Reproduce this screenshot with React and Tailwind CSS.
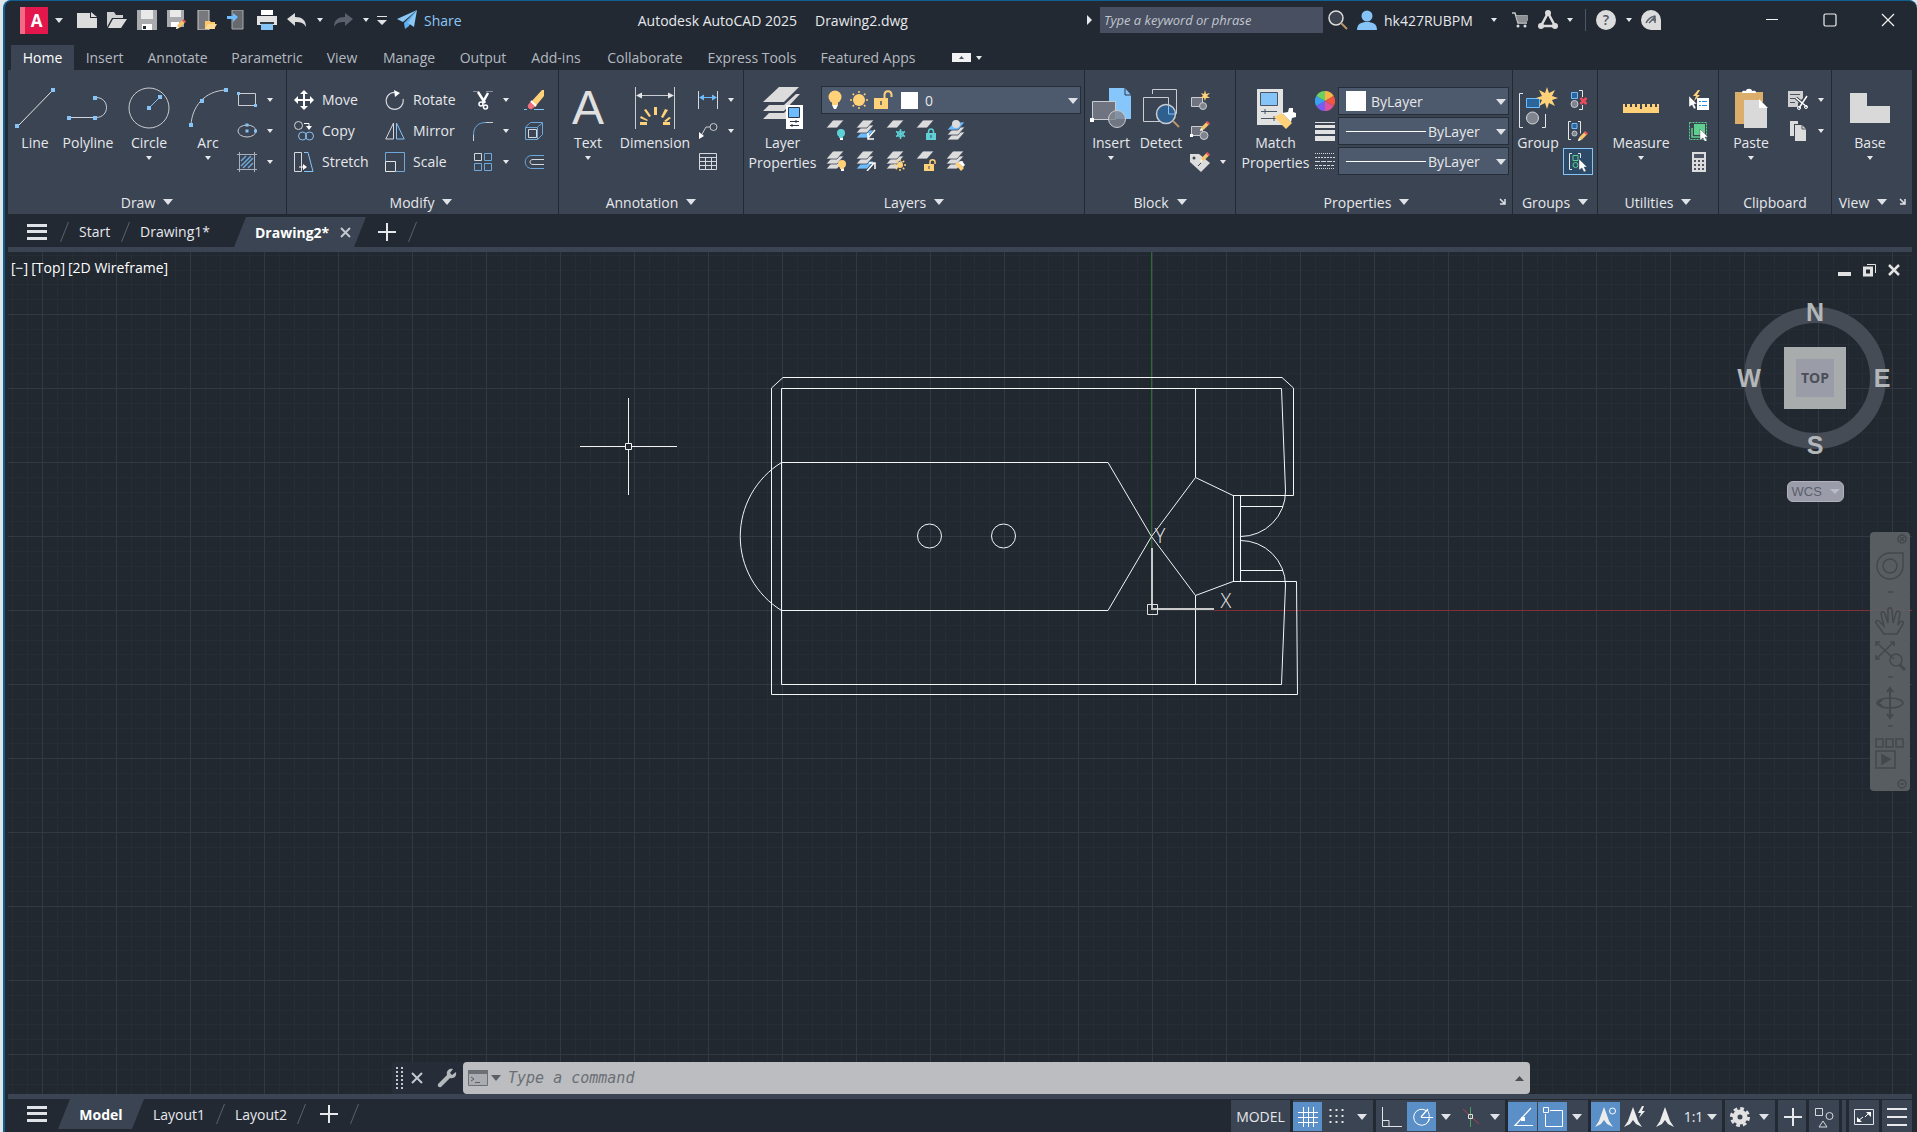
import { useState } from "react";

const Svg = ({ w = 20, h = 20, children, className = "" }) => (
  <svg
    width={w}
    height={h}
    viewBox={`0 0 ${w} ${h}`}
    fill="none"
    aria-hidden="true"
    className={`shrink-0 ${className}`}
  >
    {children}
  </svg>
);

const Caret = ({ big }) =>
  big ? (
    <Svg w={10} h={6}>
      <path d="M0 0h10L5 6z" fill="#dfe2e6" />
    </Svg>
  ) : (
    <Svg w={6} h={4}>
      <path d="M0 0h6L3 4z" fill="#e6e8eb" />
    </Svg>
  );

// ---------- shared icon parts ----------

const Sheet = ({ y = 0, fill = "#dcdcdc" }) => (
  <path d={`M7 ${y}h11l-7 8h-11z`} fill={fill} stroke="#3b4453" strokeWidth=".8" />
);

const Stack = ({ top = "#dcdcdc", low = "#dcdcdc" }) => (
  <>
    <Sheet y={10} fill={low} />
    <Sheet y={5} />
    <Sheet y={0} fill={top} />
  </>
);

const Bulb = ({ x, y, fill }) => (
  <>
    <circle cx={x} cy={y} r="4" fill={fill} />
    <path d={`M${x - 2} ${y + 3}h4v2h-4z`} fill={fill} />
    <path d={`M${x - 1} ${y + 5}h3v2h-3z`} fill="#fff" />
  </>
);

const sunRays = [0, 45, 90, 135, 180, 225, 270, 315];

const Sun = ({ x, y, r = 4 }) => (
  <>
    <circle cx={x} cy={y} r={r} fill="#ffd27a" />
    {sunRays.map((a) => (
      <path
        key={a}
        d={`M${x} ${y - r - 1}v-2`}
        stroke="#ffd27a"
        strokeWidth="1.500"
        transform={`rotate(${a} ${x} ${y})`}
      />
    ))}
  </>
);

const Pencil = ({ x = 0, y = 0 }) => (
  <g transform={`translate(${x} ${y})`}>
    <path d="M0 10l1.500-4L7 .5 9.500 3 4 8.500z" fill="#f6c56b" />
    <path d="M6 1.500L7.500 0 10 2.500 8.500 4z" fill="#e8505b" />
    <path d="M0 10l1-3 2 2z" fill="#fff" />
  </g>
);

const Pointer = ({ x = 0, y = 0 }) => (
  <path
    d={`M${x} ${y}v11l3-2 2 4 2-1-2-4h3z`}
    fill="#fff"
    stroke="#3b4453"
    strokeWidth=".4"
  />
);

const Dot = ({ x, y }) => <path d={`M${x - 2} ${y - 2}h4v4h-4z`} fill="#86c3f7" />;

// ---------- quick access toolbar ----------

const quickIcons = [
  {
    label: "New",
    icon: <path d="M0 3h13v5h7v10H0zM14 2l6 5h-6z" fill="#dcdcdc" />,
  },
  {
    label: "Open",
    icon: (
      <>
        <path d="M0 2h7l2 3h7v3H5L0 17z" fill="#cfcfcf" />
        <path d="M6 9h14l-6 9H1z" fill="#dcdcdc" />
      </>
    ),
  },
  {
    label: "Save",
    icon: (
      <>
        <path d="M0 0h20v20H0z" fill="#a9abae" />
        <path d="M4 0h12v9H4z" fill="#e9e9e9" />
        <path d="M5 14h10v6H5z" fill="#fff" />
        <path d="M6 16h3v3H6z" fill="#222933" />
      </>
    ),
  },
  {
    label: "Save As",
    icon: (
      <>
        <path d="M0 0h17v17H0z" fill="#a9abae" />
        <path d="M3 0h11v7H3z" fill="#e9e9e9" />
        <path d="M4 12h8v5H4z" fill="#fff" />
        <Pencil x={9} y={9} />
      </>
    ),
  },
  {
    label: "Open from Web & Mobile",
    icon: (
      <>
        <path d="M1 0h11v20H1z" fill="#77797d" stroke="#c9c9c9" />
        <path d="M8 11h5l1 1h4v7H8z" fill="#ffc766" />
        <path d="M11 14h9l-3 5H8z" fill="#ffda94" />
      </>
    ),
  },
  {
    label: "Save to Web & Mobile",
    icon: (
      <>
        <path d="M5 0h11v19H5z" fill="#66696e" stroke="#a9abae" />
        <path d="M0 6h6V3l5 4-5 5V9H0z" fill="#6dbcff" />
      </>
    ),
  },
  {
    label: "Plot",
    icon: (
      <>
        <path d="M4 0h12v5H4z" fill="#fff" />
        <path d="M0 6h20v9H0z" fill="#e2e2e2" />
        <path d="M3 12h14v2H3z" fill="#333b47" />
        <path d="M4 14h12v6H4z" fill="#86c3f7" />
      </>
    ),
  },
];

const Undo = ({ color }) => (
  <Svg>
    <path d="M8 3v4c7 0 11 3 11 10-2-4-5-5-11-5v4L0 9z" fill={color} />
  </Svg>
);

// ---------- ribbon icons ----------

const icons = {
  line: (
    <Svg w={40} h={42}>
      <path d="M3 39L38 3" stroke="#e6e6e6" />
      <Dot x={2} y={39} />
      <Dot x={38} y={3} />
    </Svg>
  ),
  polyline: (
    <Svg w={42} h={42}>
      <path d="M2 30.500h27c14 0 14-20 0-20" stroke="#d0d3d7" />
      <Dot x={2} y={31} />
      <Dot x={28} y={31} />
      <Dot x={28} y={11} />
    </Svg>
  ),
  circle: (
    <Svg w={42} h={42}>
      <circle cx="21" cy="21" r="20" stroke="#c9ccd1" />
      <path d="M21 21L32 10" stroke="#86c3f7" />
      <Dot x={21} y={21} />
      <Dot x={32} y={10} />
    </Svg>
  ),
  arc: (
    <Svg w={40} h={42}>
      <path d="M3 38C4 20 16 4 38 3" stroke="#c9ccd1" />
      <Dot x={3} y={38} />
      <Dot x={14} y={14} />
      <Dot x={38} y={3} />
    </Svg>
  ),
  rectangle: (
    <Svg>
      <path d="M1.500 3.500h17v12h-17z" stroke="#c9ccd1" />
      <path d="M0 2h3v3H0zM17 14h3v3h-3z" fill="#86c3f7" />
    </Svg>
  ),
  ellipse: (
    <Svg>
      <ellipse cx="10" cy="10" rx="9" ry="6" stroke="#c9ccd1" />
      <path d="M8.500 2.500h3v3h-3zM8.500 8.500h3v3h-3zM17 8.500h3v3h-3z" fill="#86c3f7" />
    </Svg>
  ),
  hatch: (
    <Svg>
      <path d="M2.500 0v20M17.500 0v20M0 2.500h20M0 17.500h20" stroke="#a9b0ba" />
      <path d="M4 9l5-5M4 14L14 4M6 16L16 6M11 16l5-5" stroke="#6fa8d8" strokeWidth="1.500" />
    </Svg>
  ),
  move: (
    <Svg>
      <path
        d="M10 0l4 4h-3v5h5V6l4 4-4 4v-3h-5v5h3l-4 4-4-4h3v-5H4v3l-4-4 4-4v3h5V4H6z"
        fill="#fff"
      />
    </Svg>
  ),
  copy: (
    <Svg>
      <circle cx="4.500" cy="4.500" r="4" stroke="#d5d8dc" />
      <path d="M10 2.500h5V7" stroke="#fff" />
      <path d="M12 5h6l-3 4z" fill="#fff" />
      <circle cx="8.500" cy="15" r="4" stroke="#86c3f7" />
      <circle cx="15.500" cy="15" r="4" stroke="#86c3f7" />
    </Svg>
  ),
  stretch: (
    <Svg>
      <path d="M.5.500h7v19h-7z" stroke="#d5d8dc" />
      <path d="M10 .5h4l5 19H10" stroke="#86c3f7" />
      <path d="M5 15h5" stroke="#fff" />
      <path d="M9 12l4 3-4 3z" fill="#fff" />
    </Svg>
  ),
  rotate: (
    <Svg>
      <path d="M13 3a8.500 8.500 0 1 0 5 6" stroke="#d5d8dc" strokeWidth="1.200" />
      <path d="M9 0l6 3-5 4z" fill="#fff" />
    </Svg>
  ),
  mirror: (
    <Svg>
      <path d="M8.500 2v16H.8z" stroke="#d5d8dc" />
      <path d="M11.500 2v16h7.700z" stroke="#86c3f7" />
    </Svg>
  ),
  scale: (
    <Svg>
      <path d="M.5 9V.500h19v19H11" stroke="#6fa8d8" />
      <path d="M.5 9.500h10v10H.5z" stroke="#e6e6e6" />
    </Svg>
  ),
  trim: (
    <Svg>
      <path d="M0 1.500h6M13 1.500h7" stroke="#86909c" />
      <path d="M5 2l7 11M15 3l-5 9" stroke="#fff" strokeWidth="2.500" />
      <circle cx="8" cy="14" r="2" stroke="#fff" strokeWidth="1.500" />
      <circle cx="12.500" cy="17" r="2" stroke="#fff" strokeWidth="1.500" />
    </Svg>
  ),
  fillet: (
    <Svg>
      <path d="M.5 20v-6" stroke="#c9ccd1" />
      <path d="M.5 14C.5 6 5 1.500 13 1.500" stroke="#6fa8d8" />
      <path d="M13 1.500h7" stroke="#c9ccd1" />
    </Svg>
  ),
  array: (
    <Svg>
      <path d="M1.500 1.500h7v7h-7z" stroke="#d5d8dc" />
      <path d="M11.500 1.500h7v7h-7zM1.500 11.500h7v7h-7zM11.500 11.500h7v7h-7z" stroke="#6fa8d8" />
    </Svg>
  ),
  erase: (
    <Svg>
      <path d="M0 19.500h3M10 19.500h10" stroke="#86c3f7" />
      <path d="M7 12L18 0h2v6l-9 11z" fill="#ffd27a" />
      <path d="M4 15l3-4 5 5-4 3c-3 1-5-2-4-4z" fill="#f0707c" />
      <path d="M7 11l5 5" stroke="#fff" strokeWidth="2" />
    </Svg>
  ),
  explode: (
    <Svg>
      <path d="M1.500 6l5-4.500h12v12L14 18" stroke="#6fa8d8" />
      <path d="M1.500 6.500h12v12h-12zM13.500 6l5-4" stroke="#6fa8d8" />
      <path d="M4.500 8.500h8v8h-8z" stroke="#d5d8dc" />
    </Svg>
  ),
  offset: (
    <Svg>
      <path d="M20 3.500H8c-9 0-9 13 0 13h12" stroke="#6fa8d8" />
      <path d="M20 7.500H9c-4 0-4 5 0 5h11" stroke="#d5d8dc" />
    </Svg>
  ),
  dimension: (
    <Svg w={42} h={42}>
      <path d="M1.500 0v42M40.500 0v42M3 8.500h36" stroke="#c9ccd1" />
      <path d="M2 8.500l6-3v6zM40 8.500l-6-3v6z" fill="#e6e6e6" />
      <path
        d="M20 28v-8h3v8zM15 30l-5-7 2-1 5 7zM27 30l4-8 3 1-5 8zM13 34l-7-3 1-2 7 4zM30 34l5-4 2 1-5 4zM6 35h7v3H6zM29 35h7v3h-7z"
        fill="#ffd27a"
      />
    </Svg>
  ),
  linear: (
    <Svg>
      <path d="M.5 1v18M19.500 1v18" stroke="#d5d8dc" />
      <path d="M3 7.500h14" stroke="#6dbcff" />
      <path d="M1 7.500l5-3v6zM19 7.500l-5-3v6z" fill="#6dbcff" />
    </Svg>
  ),
  leader: (
    <Svg>
      <circle cx="15.500" cy="6" r="3.500" stroke="#c9ccd1" />
      <path d="M12 6H8l-5 9" stroke="#c9ccd1" />
      <path d="M1 18V11l5 4z" fill="#fff" />
    </Svg>
  ),
  table: (
    <Svg>
      <path d="M1.500 1.500h17v16h-17zM1 5.500h18M1 9.500h18M1 13.500h18M7.500 5v12M13.500 5v12" stroke="#d5d8dc" />
    </Svg>
  ),
  layerProps: (
    <Svg w={42} h={42}>
      <path d="M17 0h20L22 15H1z" fill="#dcdcdc" />
      <path d="M1 24l6-6h15l12-11h4L22 24z" fill="#dcdcdc" />
      <path d="M1 32l6-6h15l2-2v8z" fill="#dcdcdc" />
      <path d="M24 18h17v24H24z" fill="#fff" />
      <path d="M26.500 20.500h11v10h-11z" fill="#6dbcff" stroke="#2c3644" />
      <path d="M28 34.500h9M28 38.500h9M34 33v3M30 37v3" stroke="#2c3644" />
    </Svg>
  ),
  insert: (
    <Svg w={42} h={42}>
      <path d="M19 1h16l6 7v24H19z" fill="#86c6fb" />
      <path d="M35 1v7h6" stroke="#2c3644" />
      <path d="M2.500 14.500h23v18h-23z" fill="#6f7480" stroke="#c9ccd1" />
      <path d="M0 31h4v4H0z" fill="#fff" />
      <circle cx="27" cy="32" r="8.500" fill="#7f848e" fillOpacity=".8" stroke="#c9ccd1" />
    </Svg>
  ),
  detect: (
    <Svg w={42} h={42}>
      <path d="M12.500 7V2.500h24v24H33" stroke="#c9ccd1" />
      <path d="M3.500 10.500h25v24h-25z" stroke="#c9ccd1" />
      <circle cx="26" cy="27" r="9.500" fill="#2f5f8f" stroke="#c9ccd1" strokeWidth="1.500" />
      <path d="M28.500 19v8h7" stroke="#86c3f7" />
      <path d="M33 34l6 6" stroke="#b9946c" strokeWidth="2" />
    </Svg>
  ),
  match: (
    <Svg w={42} h={42}>
      <path d="M2 2h26v36H2z" fill="#e2e2e2" />
      <path d="M5.500 5.500h17v13h-17z" fill="#86c3f7" stroke="#4b5563" />
      <path d="M6 24.500h16M6 31.500h16M10 22v5M19 29v5" stroke="#4b5563" />
      <path d="M19 30l8-4 10 10-6 6z" fill="#ffd27a" />
      <path d="M27 26l6-1 1-4h4v4l3 1v4l-4 1-1 4z" fill="#fff" />
    </Svg>
  ),
  colorWheel: (
    <Svg>
      <path d="M10 10V0a10 10 0 0 1 8.700 5z" fill="#f7b547" />
      <path d="M10 10l8.700-5a10 10 0 0 1 0 10z" fill="#f0563f" />
      <path d="M10 10l8.700 5A10 10 0 0 1 10 20z" fill="#e0529c" />
      <path d="M10 10v10a10 10 0 0 1-8.700-5z" fill="#7a5cf0" />
      <path d="M10 10l-8.700 5a10 10 0 0 1 0-10z" fill="#3aa0f0" />
      <path d="M10 10L1.300 5A10 10 0 0 1 10 0z" fill="#6ccf5f" />
    </Svg>
  ),
  weight: (
    <Svg>
      <path d="M0 1h20v1H0zM0 4h20v3H0zM0 9h20v4H0zM0 15h20v5H0z" fill="#e2e2e2" />
    </Svg>
  ),
  linetype: (
    <Svg>
      <path d="M0 2.500h20" stroke="#d5d8dc" strokeDasharray="1 1" />
      <path d="M0 6.500h20" stroke="#d5d8dc" strokeDasharray="2 1" />
      <path d="M0 10.500h20" stroke="#d5d8dc" strokeDasharray="5 1" />
      <path d="M0 14.500h20" stroke="#d5d8dc" strokeDasharray="3 1" />
      <path d="M0 17.500h20" stroke="#d5d8dc" strokeDasharray="1 1" />
    </Svg>
  ),
  group: (
    <Svg w={42} h={42}>
      <path d="M6 6.500H2.500v34H6M25 40.500h3.500V27" stroke="#e6e6e6" />
      <path d="M9.500 11.500h13v9h-13z" fill="#2c659c" stroke="#6dbcff" />
      <circle cx="15.500" cy="31" r="6" fill="#7f848e" stroke="#d5d8dc" />
      <path
        d="M30 0l2 6 6-3-3 6 6 2-6 2 3 6-6-3-2 6-2-6-6 3 3-6-6-2 6-2-3-6 6 3z"
        fill="#ffd27a"
      />
    </Svg>
  ),
  ruler: (
    <Svg w={42} h={42}>
      <path
        d="M3 17h2v3h2v-3h3v3h2v-3h3v3h2v-3h3v5h2v-5h3v3h2v-3h3v3h2v-3h3v3h2v-3h2v9H3z"
        fill="#ffd27a"
      />
    </Svg>
  ),
  paste: (
    <Svg w={42} h={42}>
      <path d="M5 5h28v10H14v22H5z" fill="#dcae6c" />
      <path d="M12 6c0-3 2-2 4-2 0-3 6-3 6 0 2 0 4-1 4 2z" fill="#fff" />
      <path d="M14 13h15l8 8v20H14z" fill="#d9d9d9" />
      <path d="M29 12l9 9h-9z" fill="#fff" />
    </Svg>
  ),
  base: (
    <Svg w={42} h={42}>
      <path d="M1 6h17v13h23v17H1z" fill="#d9d9d9" />
    </Svg>
  ),
  createBlock: (
    <Svg>
      <path d="M1.500 7.500h11v9h-11z" fill="#6f7480" stroke="#c9ccd1" />
      <circle cx="13" cy="16" r="3.500" fill="#7f848e" stroke="#c9ccd1" />
      <path d="M15 0l1 4 4-1-3 3 3 2-4 0-1 3-1-3-4 0 3-2-2-3 3 1z" fill="#ffd27a" />
    </Svg>
  ),
  editBlock: (
    <Svg>
      <path d="M1.500 5.500h11v9h-11z" fill="#6f7480" stroke="#c9ccd1" />
      <circle cx="14" cy="14.500" r="4" fill="#7f848e" stroke="#c9ccd1" />
      <path d="M0 13h3v3H0z" fill="#fff" />
      <Pencil x={10} y={0} />
    </Svg>
  ),
  attribute: (
    <Svg>
      <path d="M0 2h9l11 9-9 9L0 10z" fill="#dcdcdc" />
      <circle cx="4" cy="6" r="1.500" fill="#3b4453" />
      <path d="M8 14l3-3" stroke="#3b4453" />
      <Pencil x={10} y={0} />
    </Svg>
  ),
  ungroup: (
    <Svg>
      <path d="M3.500 2.500h6v6h-6z" fill="#2c659c" stroke="#6dbcff" />
      <circle cx="6.500" cy="14" r="3.500" fill="#7f848e" stroke="#c9ccd1" />
      <path d="M11 .500h3.500V7M14.500 15v4.500H11" stroke="#e6e6e6" />
      <path d="M12.500 8l6 6M18.500 8l-6 6" stroke="#ee4b5a" strokeWidth="2.500" />
    </Svg>
  ),
  groupEdit: (
    <Svg>
      <path d="M3 .500H.500v18H3M10 .500h2.500v12" stroke="#e6e6e6" />
      <path d="M4 2.500h5v5H4z" fill="#2c659c" stroke="#6dbcff" />
      <circle cx="6.500" cy="12.500" r="2.500" fill="#7f848e" stroke="#c9ccd1" />
      <Pencil x={10} y={10} />
    </Svg>
  ),
  groupSelect: (
    <Svg>
      <path d="M4 1.500H1.500v16H4M10 1.500h2.500V6" stroke="#e6e6e6" />
      <path d="M5 3.500h5v5H5z" stroke="#5bd08a" />
      <circle cx="7.500" cy="13" r="2.500" stroke="#5bd08a" />
      <Pointer x={11} y={7} />
    </Svg>
  ),
  quickSelect: (
    <Svg>
      <Pointer x={0} y={6} />
      <path d="M9 0L4 6h3l-2 5 6-6H8l3-5z" fill="#ffd27a" />
      <path d="M8 8h12v12H8z" fill="#fff" />
      <path d="M10 11.500h2M10 15.500h2M13 11.500h5M13 15.500h5" stroke="#2c8be0" />
    </Svg>
  ),
  selectAll: (
    <Svg>
      <path d="M.5 1.500h17v17H.5z" stroke="#5bd08a" strokeDasharray="2 1" />
      <path d="M5 3h11v11H5z" fill="#5fcf8d" />
      <path d="M3 7v9h9" stroke="#5fcf8d" strokeWidth="1.500" />
      <Pointer x={11} y={8} />
    </Svg>
  ),
  calculator: (
    <Svg>
      <path d="M3 0h14v20H3z" fill="#dcdcdc" />
      <path d="M5 2h10v4H5z" fill="#4b5563" />
      <path
        d="M5 8h2v2H5zM9 8h2v2H9zM13 8h2v2h-2zM5 12h2v2H5zM9 12h2v2H9zM13 12h2v2h-2zM5 16h2v2H5zM9 16h2v2H9zM13 16h2v2h-2z"
        fill="#4b5563"
      />
    </Svg>
  ),
  cut: (
    <Svg>
      <path d="M0 1h15v7l-5 5v4H0z" fill="#d0d0d0" />
      <path d="M2 4.500h10M2 8.500h6M2 12.500h5" stroke="#4b5563" />
      <path d="M8 8l11 9M19 6l-8 12" stroke="#3b4453" strokeWidth="3.500" />
      <path d="M8 8l11 9M19 6l-8 12" stroke="#fff" strokeWidth="1.500" />
      <circle cx="11" cy="18" r="1.500" stroke="#fff" />
      <circle cx="18" cy="17" r="1.500" stroke="#fff" />
    </Svg>
  ),
  copyClip: (
    <Svg>
      <path d="M2 0h8v3H6v12H2z" fill="#dcdcdc" />
      <path d="M7 4h7l4 4v12H7z" fill="#dcdcdc" />
      <path d="M14 4v4h4" stroke="#4b5563" />
    </Svg>
  ),
};

// ---------- layer tools ----------

const layerTools = [
  ["Off", <><Sheet /><Bulb x={15} y={13} fill="#5fd0d6" /></>],
  ["Isolate", <><Stack low="#6dbcff" /><path d="M19 10l-7 8M12 13v6h6" stroke="#fff" strokeWidth="1.500" /></>],
  ["Freeze", <><Sheet /><path d="M14.500 9v10M10 11.500l9 5M19 11.500l-9 5" stroke="#5fd0d6" strokeWidth="1.500" /><circle cx="14.500" cy="14" r="3" stroke="#5fd0d6" /></>],
  ["Lock", <><Sheet /><path d="M12.500 14v-2c0-4 5-4 5 0v2" stroke="#5fd0d6" strokeWidth="1.500" /><path d="M10 13h10v7H10z" fill="#5fd0d6" /><path d="M15 15v3" stroke="#3b4453" /></>],
  ["Make Current", <><g transform="translate(1 2)"><Stack top="#6dbcff" /></g><circle cx="10" cy="4" r="4" fill="#dcdcdc" /></>],
  ["Turn All On", <><Stack /><Bulb x={16} y={13} fill="#ffd27a" /></>],
  ["Unisolate", <><Stack low="#6dbcff" /><path d="M11 20l7-8M13 12h6v6" stroke="#fff" strokeWidth="1.500" /></>],
  ["Thaw All", <><Stack /><Sun x={14} y={14} r={3} /></>],
  ["Unlock", <><Sheet /><path d="M14 14v-3c0-3 5-3 5 0v2" stroke="#ffd27a" strokeWidth="1.500" /><path d="M8 13h10v7H8z" fill="#ffd27a" /><path d="M13 15v3" stroke="#3b4453" /></>],
  ["Match Layer", <><Stack /><path d="M9 13l3-2 6 6-3 3z" fill="#ffd27a" /><path d="M12 11l4-1 3 4-2 2z" fill="#fff" /></>],
];

// ---------- ribbon building blocks ----------

const Panel = ({
  title,
  width,
  caret = true,
  launcher,
  footerPad = "",
  children,
}) => (
  <section
    className={`${width} flex flex-col border-r border-[#222933] last:border-r-0`}
  >
    <div className="flex h-[121px] items-start pt-[14px]">{children}</div>
    <div
      className={`${footerPad} relative flex h-[22px] items-center justify-center gap-2`}
    >
      <span>{title}</span>
      {caret && <Caret big />}
      {launcher && (
        <button
          aria-label={`${title} settings`}
          className="absolute right-[6px] top-[7px]"
        >
          <Svg w={7} h={7}>
            <path d="M1 1l5 5M6 1v5H1" stroke="#dfe2e6" strokeWidth="1.500" />
          </Svg>
        </button>
      )}
    </div>
  </section>
);

const BigButton = ({ icon, label, width, caret }) => (
  <button className={`${width} flex shrink-0 flex-col items-center`}>
    <span className="flex h-[49px] items-center justify-center pb-[1px]">
      {icon}
    </span>
    <span className="whitespace-pre-line text-center leading-5">{label}</span>
    {caret && (
      <span className="mt-[3px]">
        <Caret />
      </span>
    )}
  </button>
);

const SmallButton = ({ icon, label, caret, active }) => (
  <div className="flex h-[31px] items-center">
    <button
      aria-label={label}
      className={`flex h-[27px] w-[30px] items-center justify-center border ${
        active ? "border-[#86c3f7] bg-[#2d4a68]" : "border-transparent"
      }`}
    >
      {icon}
    </button>
    {caret && (
      <button aria-label={`${label} options`} className="px-[5px]">
        <Caret />
      </button>
    )}
  </div>
);

const TextButton = ({ icon, label }) => (
  <button className="flex h-[31px] items-center gap-2">
    {icon}
    {label}
  </button>
);

const Combo = ({ label, value, line, swatch, swatchSize, prefix, pad }) => (
  <div className="relative flex h-7 items-center border border-[#252d38] bg-[#4d596c]">
    {prefix}
    {swatch && <span className={`${swatchSize} ml-[7px] shrink-0 bg-white`} />}
    {line && <span className="ml-[7px] h-px w-[80px] shrink-0 bg-white" />}
    <select
      aria-label={label}
      className={`${pad} h-full min-w-0 flex-1 appearance-none bg-transparent outline-none`}
    >
      <option>{value}</option>
    </select>
    <span className="pointer-events-none absolute right-[2px] top-[11px]">
      <Caret big />
    </span>
  </div>
);

const ribbonTabs = [
  ["Home", "w-[63px]"],
  ["Insert", "w-[61px]"],
  ["Annotate", "w-[85px]"],
  ["Parametric", "w-[94px]"],
  ["View", "w-[56px]"],
  ["Manage", "w-[78px]"],
  ["Output", "w-[70px]"],
  ["Add-ins", "w-[76px]"],
  ["Collaborate", "w-[102px]"],
  ["Express Tools", "w-[112px]"],
  ["Featured Apps", "w-[120px]"],
];

function TitleBar() {
  return (
    <header className="flex h-[44px] items-center pb-[6px] pl-3">
      <button aria-label="Application menu" className="flex items-center gap-[7px]">
        <span className="relative flex h-[27px] w-[28px] items-center justify-center bg-[#e3174c] pl-[5px] text-[17px] font-bold leading-none text-white">
          <span className="absolute inset-y-0 left-0 w-[5px] bg-[#f26a86]" />
          A
        </span>
        <Svg w={8} h={5}>
          <path d="M0 0h8L4 5z" fill="#dfe2e6" />
        </Svg>
      </button>
      <div className="ml-[14px] flex items-center gap-[10px]">
        {quickIcons.map((q) => (
          <button key={q.label} aria-label={q.label}>
            <Svg>{q.icon}</Svg>
          </button>
        ))}
        <button aria-label="Undo">
          <Undo color="#dcdcdc" />
        </button>
        <Caret />
        <button aria-label="Redo" className="-scale-x-100">
          <Undo color="#5a616c" />
        </button>
        <Caret />
      </div>
      <button aria-label="Customize" className="ml-[8px]">
        <Svg w={10} h={10}>
          <path d="M0 1h10v1H0zM0 5h10L5 10z" fill="#dfe2e6" />
        </Svg>
      </button>
      <a href="#share" className="ml-[10px] flex items-center gap-[7px] text-[#8cc8f5]">
        <Svg>
          <path d="M20 0L0 9l6 3z" fill="#8cc8f5" />
          <path d="M20 0L7 13l1 6 4-3z" fill="#5fb0f0" />
          <path d="M20 0l-9 13 6 4z" fill="#8cc8f5" />
        </Svg>
        Share
      </a>
      <div className="flex flex-1 justify-center gap-[18px] pr-[3px]">
        <span>Autodesk AutoCAD 2025</span>
        <span>Drawing2.dwg</span>
      </div>
      <Svg w={5} h={10}>
        <path d="M0 0l5 5-5 5z" fill="#e6e8eb" />
      </Svg>
      <input
        aria-label="Search help"
        placeholder="Type a keyword or phrase"
        className="ml-[8px] h-[26px] w-[223px] bg-[#474f60] pl-1 text-[13px] italic outline-none placeholder:text-[#c2c6ce]"
      />
      <button aria-label="Search" className="ml-[5px]">
        <Svg>
          <circle cx="8" cy="8" r="7" fill="#3d444f" stroke="#dcdcdc" strokeWidth="1.500" />
          <path d="M13 13l6 6" stroke="#b9946c" strokeWidth="2" />
        </Svg>
      </button>
      <button className="ml-[9px] flex items-center gap-[7px]">
        <Svg>
          <circle cx="10" cy="6" r="5.500" fill="#86c3f7" />
          <path d="M0 20c0-6 4-8 10-8s10 2 10 8z" fill="#86c3f7" />
        </Svg>
        <span className="w-[100px] text-left">hk427RUBPM</span>
        <Caret />
      </button>
      <div className="ml-[14px] flex items-center gap-[9px]">
        <button aria-label="Autodesk store">
          <Svg w={18} h={18}>
            <path d="M1 2h3l3 10h9M5 5h11v4H6" stroke="#c9c9c9" strokeWidth="1.500" />
            <path d="M5 5h12l-1 6H7z" fill="#8b8e93" />
            <circle cx="7" cy="15" r="1.500" fill="#dcdcdc" />
            <circle cx="14" cy="15" r="1.500" fill="#dcdcdc" />
          </Svg>
        </button>
        <button aria-label="Stay connected" className="flex items-center gap-[9px]">
          <Svg>
            <path d="M10 3L3 16h14z" stroke="#dcdcdc" strokeWidth="2.500" />
            <circle cx="10" cy="3" r="3" fill="#dcdcdc" />
            <circle cx="3" cy="16" r="3" fill="#dcdcdc" />
            <circle cx="17" cy="16" r="3" fill="#dcdcdc" />
          </Svg>
          <Caret />
        </button>
      </div>
      <span className="ml-[12px] h-[22px] w-px bg-[#4d5663]" />
      <button aria-label="Help" className="ml-[10px] flex items-center gap-[10px]">
        <span className="flex size-5 items-center justify-center rounded-full bg-[#dcdcdc] text-[14px] font-semibold leading-none text-[#4b5563]">
          ?
        </span>
        <Caret />
      </button>
      <button aria-label="Assistant" className="ml-[9px]">
        <Svg>
          <path d="M10 0a10 10 0 0 1 10 10v10H10a10 10 0 0 1 0-20z" fill="#dcdcdc" />
          <path d="M5 13c2-4 4-6 9-7M8 13l6-6v6M10 10h5" stroke="#5a616c" strokeWidth="1.500" />
        </Svg>
      </button>
      <div className="ml-[104px] mr-[17px] flex items-center gap-[44px]">
        <button aria-label="Minimize">
          <Svg w={14} h={14}>
            <path d="M1 6.500h12" stroke="#f2f2f2" />
          </Svg>
        </button>
        <button aria-label="Maximize">
          <Svg w={14} h={14}>
            <rect x="1" y="1" width="12" height="12" rx="1.500" stroke="#f2f2f2" strokeWidth="1.200" />
          </Svg>
        </button>
        <button aria-label="Close">
          <Svg w={14} h={14}>
            <path d="M1 1l12 12M13 1L1 13" stroke="#f2f2f2" strokeWidth="1.200" />
          </Svg>
        </button>
      </div>
    </header>
  );
}

function Ribbon() {
  return (
    <div className="flex h-[144px] bg-[#3b4453]">
      <Panel title="Draw" width="w-[279px]">
        <BigButton width="w-[54px]" label="Line" icon={icons.line} />
        <BigButton width="w-[52px]" label="Polyline" icon={icons.polyline} />
        <BigButton width="w-[70px]" label="Circle" icon={icons.circle} caret />
        <BigButton width="w-[48px]" label="Arc" icon={icons.arc} caret />
        <div>
          <SmallButton label="Rectangle" icon={icons.rectangle} caret />
          <SmallButton label="Ellipse" icon={icons.ellipse} caret />
          <SmallButton label="Hatch" icon={icons.hatch} caret />
        </div>
      </Panel>

      <Panel title="Modify" width="w-[272px]" footerPad="pr-[3px]">
        <div className="ml-[7px] w-[91px]">
          <TextButton label="Move" icon={icons.move} />
          <TextButton label="Copy" icon={icons.copy} />
          <TextButton label="Stretch" icon={icons.stretch} />
        </div>
        <div className="w-[83px]">
          <TextButton label="Rotate" icon={icons.rotate} />
          <TextButton label="Mirror" icon={icons.mirror} />
          <TextButton label="Scale" icon={icons.scale} />
        </div>
        <div className="w-[51px]">
          <SmallButton label="Trim" icon={icons.trim} caret />
          <SmallButton label="Fillet" icon={icons.fillet} caret />
          <SmallButton label="Array" icon={icons.array} caret />
        </div>
        <div>
          <SmallButton label="Erase" icon={icons.erase} />
          <SmallButton label="Explode" icon={icons.explode} />
          <SmallButton label="Offset" icon={icons.offset} />
        </div>
      </Panel>

      <Panel title="Annotation" width="w-[185px]">
        <BigButton
          width="w-[58px]"
          label="Text"
          caret
          icon={
            <span className="font-['Liberation_Sans',sans-serif] text-[48px] leading-[44px] text-[#e0e0e0]">
              A
            </span>
          }
        />
        <BigButton width="w-[76px]" label="Dimension" icon={icons.dimension} />
        <div>
          <SmallButton label="Linear" icon={icons.linear} caret />
          <SmallButton label="Leader" icon={icons.leader} caret />
          <SmallButton label="Table" icon={icons.table} />
        </div>
      </Panel>

      <Panel title="Layers" width="w-[341px]">
        <BigButton
          width="w-[77px]"
          label={"Layer\nProperties"}
          icon={icons.layerProps}
        />
        <div className="w-[260px] pt-[2px]">
          <Combo
            label="Layer"
            value="0"
            swatch
            swatchSize="size-[17px]"
            pad="pl-[7px]"
            prefix={
              <span className="flex gap-1 pl-1">
                <Svg>
                  <circle cx="9" cy="7" r="6.500" fill="#ffd27a" />
                  <path d="M6 11h6v4H6z" fill="#ffd27a" />
                  <path d="M6 15h6l-2 4H8z" fill="#fff" />
                </Svg>
                <Svg>
                  <Sun x={9} y={10} r={6} />
                </Svg>
                <Svg>
                  <path d="M10.500 9V5c0-5 7-5 7 0v2" stroke="#ffd27a" strokeWidth="2" />
                  <path d="M0 8h14v11H0z" fill="#ffd27a" />
                  <path d="M7 11v4" stroke="#4b5563" strokeWidth="1.500" />
                </Svg>
              </span>
            }
          />
          <div className="grid w-[150px] grid-cols-5">
            {layerTools.map(([label, icon]) => (
              <SmallButton key={label} label={label} icon={<Svg>{icon}</Svg>} />
            ))}
          </div>
        </div>
      </Panel>

      <Panel title="Block" width="w-[151px]">
        <BigButton width="w-[52px]" label="Insert" icon={icons.insert} caret />
        <BigButton width="w-[48px]" label="Detect" icon={icons.detect} />
        <div>
          <SmallButton label="Create block" icon={icons.createBlock} />
          <SmallButton label="Edit block" icon={icons.editBlock} />
          <SmallButton label="Edit attribute" icon={icons.attribute} caret />
        </div>
      </Panel>

      <Panel title="Properties" width="w-[277px]" launcher footerPad="pr-[15px]">
        <BigButton
          width="w-[79px]"
          label={"Match\nProperties"}
          icon={icons.match}
        />
        <div className="flex w-5 flex-col gap-[10px] pt-[7px]">
          {icons.colorWheel}
          {icons.weight}
          {icons.linetype}
        </div>
        <div className="ml-[3px] flex w-[171px] flex-col gap-[2px] pt-[3px]">
          <Combo
            label="Object color"
            value="ByLayer"
            swatch
            swatchSize="size-5"
            pad="pl-[5px]"
          />
          <Combo label="Lineweight" value="ByLayer" line pad="pl-[2px]" />
          <Combo label="Linetype" value="ByLayer" line pad="pl-[2px]" />
        </div>
      </Panel>

      <Panel title="Groups" width="w-[85px]">
        <BigButton width="w-[50px]" label="Group" icon={icons.group} />
        <div>
          <SmallButton label="Ungroup" icon={icons.ungroup} />
          <SmallButton label="Group edit" icon={icons.groupEdit} />
          <SmallButton label="Group selection" icon={icons.groupSelect} active />
        </div>
      </Panel>

      <Panel title="Utilities" width="w-[121px]">
        <BigButton width="w-[86px]" label="Measure" icon={icons.ruler} caret />
        <div>
          <SmallButton label="Quick select" icon={icons.quickSelect} />
          <SmallButton label="Select all" icon={icons.selectAll} />
          <SmallButton label="Calculator" icon={icons.calculator} />
        </div>
      </Panel>

      <Panel title="Clipboard" width="w-[113px]" caret={false}>
        <BigButton width="w-[64px]" label="Paste" icon={icons.paste} caret />
        <div>
          <SmallButton label="Cut" icon={icons.cut} caret />
          <SmallButton label="Copy clip" icon={icons.copyClip} caret />
        </div>
      </Panel>

      <Panel
        title="View"
        width="min-w-[80px] flex-1"
        launcher
        footerPad="pr-[18px]"
      >
        <BigButton width="w-[76px]" label="Base" icon={icons.base} caret />
      </Panel>
    </div>
  );
}

const Menu = () => (
  <Svg w={20} h={16}>
    <path d="M0 0h20v3H0zM0 6h20v3H0zM0 13h20v3H0z" fill="#dfe2e6" />
  </Svg>
);

const Plus = () => (
  <Svg w={18} h={18}>
    <path d="M8 0h2v8h8v2h-8v8H8v-8H0V8h8z" fill="#e6e8eb" />
  </Svg>
);

const Slash = () => (
  <Svg w={9} h={20}>
    <path d="M8.500 0L.5 20" stroke="#59616d" />
  </Svg>
);

function FileTabs() {
  return (
    <nav className="flex h-[33px] items-center pl-[19px] pt-[2px]">
      <button aria-label="Drawing list">
        <Menu />
      </button>
      <span className="ml-[13px]">
        <Slash />
      </span>
      <button className="ml-[10px] w-[42px] text-left">Start</button>
      <Slash />
      <button className="ml-[10px] w-[72px] text-left">Drawing1*</button>
      <div className="ml-[22px] flex h-[30px] w-[132px] items-center gap-[11px] self-end bg-[#3b4453] pl-[21px] font-bold text-white [clip-path:polygon(12px_0,100%_0,calc(100%_-_12px)_100%,0_100%)]">
        <button>Drawing2*</button>
        <button aria-label="Close Drawing2">
          <Svg w={11} h={11}>
            <path d="M1 1l9 9M10 1l-9 9" stroke="#c4c8ce" strokeWidth="2" />
          </Svg>
        </button>
      </div>
      <button aria-label="New drawing" className="ml-[12px]">
        <Plus />
      </button>
      <span className="ml-[12px]">
        <Slash />
      </span>
    </nav>
  );
}

// Plan linework, in window pixels
const planPaths = [
  "M1233 495.500H1293.500V388L1282 377.500H783L771.500 388V694.500H1297.500L1296.500 581.500H1233",
  "M781.500 388.500V684.500H1281.500L1285.500 585A45 45 0 0 0 1240.500 540.500",
  "M781.500 388.500H1281.500L1285.500 491A45 45 0 0 1 1240.500 536.500",
  "M781 462.500H1108L1151.500 536.500L1195.500 595.500L1233 581.500",
  "M781 610.500H1108L1151.500 536.500L1195.500 477.500L1233 495.500",
  "M1195.500 388V477.500M1195.500 595.500V684",
  "M1233.500 495V581M1240.500 495V581",
  "M1240 506.500H1283M1240 570.500H1283",
  "M781.500 462.500A87 87 0 0 0 781.500 610.500",
];

function DrawingArea() {
  return (
    <svg className="absolute inset-0 h-full w-full" aria-label="Floor plan">
      <defs>
        <pattern id="grid" x="34" y="62" width="74" height="74" patternUnits="userSpaceOnUse">
          <path
            d="M15.500 0v74M30.500 0v74M44.500 0v74M59.500 0v74M0 15.500h74M0 30.500h74M0 44.500h74M0 59.500h74"
            stroke="#262d36"
          />
          <path d="M.5 0v74M0 .5h74" stroke="#323943" />
        </pattern>
      </defs>
      <rect width="100%" height="100%" fill="url(#grid)" />
      <g transform="translate(-8 -252)" fill="none">
        <path d="M1151.500 252V548" stroke="#2d6b34" />
        <path d="M1214 610.500H4000" stroke="#803036" />
        <g stroke="#f4f5f7">
          {planPaths.map((d) => (
            <path key={d} d={d} />
          ))}
          <circle cx="929.500" cy="536" r="12" />
          <circle cx="1003.500" cy="536" r="12" />
        </g>
        {/* UCS icon */}
        <path d="M1152 548V609H1214" stroke="#c9c9c9" strokeWidth="2" />
        <path d="M1147.500 604.500h10v10h-10z" stroke="#e0e0e0" />
        <g fill="#e4e4e4" textAnchor="middle" className="text-[20px] font-light">
          <text x="1160" y="543">Y</text>
          <text x="1226" y="608">X</text>
        </g>
        {/* crosshair */}
        <path
          d="M580 446.500H625M632 446.500H677M628.500 398V443M628.500 450V495M625.500 443.500h6v6h-6z"
          stroke="#f2f2f2"
        />
      </g>
    </svg>
  );
}

function ViewCube() {
  return (
    <div className="absolute right-[22px] top-[48px] flex flex-col items-center">
      <svg width="150" height="160" className="overflow-visible" aria-label="View cube">
        <circle cx="75" cy="78" r="63" fill="none" stroke="#464c55" strokeWidth="16" />
        <path d="M44 47h62v62H44z" fill="#a9acad" />
        <path d="M56 59h38v38H56z" fill="#9a9da8" />
        <text
          x="75"
          y="83"
          textAnchor="middle"
          fill="#4b4f57"
          className="text-[14px] font-bold"
        >
          TOP
        </text>
        <g
          textAnchor="middle"
          fill="#b4b7b9"
          className="font-['Liberation_Sans',sans-serif] text-[25px] font-bold"
        >
          <text x="75" y="21">N</text>
          <text x="75" y="154">S</text>
          <text x="9" y="87">W</text>
          <text x="142" y="87">E</text>
        </g>
      </svg>
      <button className="mt-[21px] flex h-[21px] w-[57px] items-center gap-2 rounded-md border border-[#b0b3be] bg-[#9a9da9] pl-1 font-['Liberation_Sans',sans-serif] text-[13px] text-[#5b5f6b]">
        WCS
        <Svg w={10} h={6}>
          <path d="M0 0h10L5 5z" fill="#b9bcc5" />
        </Svg>
      </button>
    </div>
  );
}

function NavBar() {
  return (
    <aside className="absolute right-[2px] top-[280px] flex h-[259px] w-10 flex-col items-center rounded-sm bg-[#5e6367]/90">
      <svg width="40" height="259" fill="none" stroke="#43484e" strokeWidth="1.500" aria-label="Navigation tools">
        <circle cx="32" cy="7" r="4" />
        <path d="M30 5l4 4M34 5l-4 4" />
        <path d="M20 21h13v13A13 13 0 1 1 20 21z" />
        <circle cx="20" cy="34" r="7" />
        <path d="M18 60h5M18 145h5M18 194h5" />
        <path d="M14 102L6 91c-1-3 2-3 4-1l4 4-3-12c0-3 3-3 4 0l3 9v-13c0-3 4-3 4 0l1 13 3-10c1-3 4-2 4 0l-2 12 2-3c3-2 4 0 3 2l-6 10z" />
        <path d="M6 110l18 17M24 110L6 127M6 114v-4h4M20 110h4v4M6 123v4h4" />
        <circle cx="26" cy="128" r="6" />
        <path d="M30 133l5 5" strokeWidth="3" />
        <ellipse cx="20" cy="171" rx="13" ry="5" />
        <path d="M20 156v30M17 160l3-4 3 4M17 182l3 4 3-4M12 168l-4 3 4 3" strokeWidth="2" />
        <path d="M6 207h7v8H6zM16 207h7v8h-7zM26 207h7v8h-7zM6 219h19v17H6z" />
        <path d="M12 223v9l8-5z" fill="#43484e" />
        <circle cx="32" cy="252" r="4" />
        <path d="M30 252h4" />
      </svg>
    </aside>
  );
}

function ViewportControls() {
  return (
    <div className="absolute right-[12px] top-[12px] flex items-center gap-[12px]">
      <button aria-label="Minimize viewport">
        <Svg w={13} h={13}>
          <path d="M0 8h13v4H0z" fill="#e2e2e2" />
        </Svg>
      </button>
      <button aria-label="Restore viewport">
        <Svg w={13} h={13}>
          <path d="M4 .500h8.500V9" stroke="#e2e2e2" />
          <path d="M1.500 4h7v7h-7z" stroke="#e2e2e2" strokeWidth="3" />
        </Svg>
      </button>
      <button aria-label="Close viewport">
        <Svg w={12} h={13}>
          <path d="M1 1l10 10M11 1L1 11" stroke="#e2e2e2" strokeWidth="2.500" />
        </Svg>
      </button>
    </div>
  );
}

function CommandLine() {
  return (
    <div className="absolute bottom-0 left-[384px] right-[382px] flex h-8">
      <div className="flex w-[71px] shrink-0 items-center bg-[#262c38]">
        <svg width="7" height="22" className="ml-[4px]" aria-hidden="true">
          <path
            d="M1 0v22M6 0v22"
            stroke="#c4c8ce"
            strokeWidth="2"
            strokeDasharray="2 2"
          />
        </svg>
        <button aria-label="Close command line" className="ml-[8px]">
          <Svg w={12} h={12}>
            <path d="M1 1l10 10M11 1L1 11" stroke="#c4c8ce" strokeWidth="2" />
          </Svg>
        </button>
        <button aria-label="Customize command line" className="ml-[14px]">
          <Svg>
            <path
              d="M19 4l-4 3-2-2 3-4c-4-1-7 2-6 6L1 16c-1 2 1 4 3 3l9-9c4 1 7-2 6-6z"
              fill="#b4b7bb"
            />
          </Svg>
        </button>
      </div>
      <div className="flex flex-1 items-center rounded-sm bg-[#bbbdc0]">
        <button aria-label="Recent commands" className="ml-[5px] flex items-center gap-[3px]">
          <Svg w={20} h={16}>
            <path d="M.5.500h19v15H.5z" fill="#a9acb0" stroke="#6b7077" />
            <path d="M0 0h20v4H0z" fill="#6b7077" />
            <path d="M3 7l3 2-3 2M7 12.500h5" stroke="#5b6067" />
          </Svg>
          <Svg w={10} h={6}>
            <path d="M0 0h10L5 6z" fill="#5b6067" />
          </Svg>
        </button>
        <input
          aria-label="Command"
          placeholder="Type a command"
          className="ml-[7px] flex-1 bg-transparent font-['DejaVu_Sans_Mono',monospace] text-[15px] italic outline-none placeholder:text-[#6b6f75]"
        />
        <button aria-label="Command history" className="mr-[6px]">
          <Svg w={9} h={5}>
            <path d="M0 5h9L4.500 0z" fill="#4b5057" />
          </Svg>
        </button>
      </div>
    </div>
  );
}

// ---------- status bar ----------

const Toggle = ({ label, active, width = "w-[29px]", children }) => (
  <button
    aria-label={label}
    aria-pressed={!!active}
    className={`${width} flex h-[29px] shrink-0 items-center justify-center ${
      active ? "bg-[#5a8fc7]" : ""
    }`}
  >
    {children}
  </button>
);

const StatusGroup = ({ width, children }) => (
  <div
    className={`${width} flex h-8 shrink-0 items-center bg-[#3b4453] pt-[1px]`}
  >
    {children}
  </div>
);

const StatusCaret = ({ label, width = "w-[20px]" }) => (
  <button aria-label={label} className={`${width} flex justify-center`}>
    <Caret big />
  </button>
);

const Compass = ({ children }) => (
  <Svg w={22} h={22}>
    <path d="M9 1l4 11 1 3 4 6-6-3-3-4-3 4-6 3 4-6 1-3z" fill="#ececec" />
    {children}
  </Svg>
);

function StatusBar() {
  return (
    <footer className="flex h-[33px] items-end justify-between">
      <nav className="flex items-center self-start pl-[19px]">
        <button aria-label="Layout list">
          <Menu />
        </button>
        <button className="ml-[11px] h-[30px] w-[86px] bg-[#3b4453] font-bold text-white [clip-path:polygon(12px_0,100%_0,calc(100%_-_12px)_100%,0_100%)]">
          Model
        </button>
        <button className="ml-[9px] w-[52px]">Layout1</button>
        <span className="ml-[11px]">
          <Slash />
        </span>
        <button className="ml-[10px] w-[52px]">Layout2</button>
        <span className="ml-[10px]">
          <Slash />
        </span>
        <button aria-label="New layout" className="ml-[14px]">
          <Plus />
        </button>
        <span className="ml-[12px]">
          <Slash />
        </span>
      </nav>

      <div className="flex items-center gap-[3px]">
        <StatusGroup width="w-[59px]">
          <button className="w-full text-center">MODEL</button>
        </StatusGroup>
        <StatusGroup width="w-[80px]">
          <Toggle label="Grid" active>
            <Svg>
              <path d="M5.500 0v20M10.500 0v20M15.500 0v20M0 5.500h20M0 10.500h20M0 15.500h20" stroke="#fff" />
            </Svg>
          </Toggle>
          <Toggle label="Snap" width="w-[30px]">
            <Svg w={16} h={16}>
              <path
                d="M1.500 0v16M7.500 0v16M13.500 0v16"
                stroke="#dfe2e6"
                strokeWidth="2"
                strokeDasharray="2 4"
              />
            </Svg>
          </Toggle>
          <StatusCaret label="Snap options" />
        </StatusGroup>
        <StatusGroup width="w-[129px]">
          <Toggle label="Ortho" width="w-[31px]">
            <Svg>
              <path d="M.5 0v19.500H20M1 13.500h6v6" stroke="#dfe2e6" />
            </Svg>
          </Toggle>
          <Toggle label="Polar tracking" active>
            <Svg w={22} h={22}>
              <path d="M10 11L17 3M10 11.500h12" stroke="#fff" strokeWidth="1.200" />
              <path d="M15 4.500a8 8 0 1 0 3.500 8.500" stroke="#fff" />
              <path d="M16 4c3 3 3 10 0 13" stroke="#fff" />
            </Svg>
          </Toggle>
          <StatusCaret label="Polar options" />
          <Toggle label="Isometric drafting">
            <Svg>
              <path d="M2 2l16 15" stroke="#b0404a" />
              <path d="M9.500 0v20" stroke="#4f9a63" />
              <path d="M7.500 7.500h4v4h-4z" stroke="#dfe2e6" />
            </Svg>
          </Toggle>
          <StatusCaret label="Isoplane options" />
        </StatusGroup>
        <StatusGroup width="w-[80px]">
          <Toggle label="Snap tracking" active>
            <Svg>
              <path d="M18 1L2 18.500h18" stroke="#fff" strokeWidth="1.200" />
              <path d="M8 10h4v4H8z" fill="#fff" />
            </Svg>
          </Toggle>
          <span className="ml-[1px]">
            <Toggle label="Object snap" active>
              <Svg w={22} h={22}>
                <path d="M3.500 8v12.500h17v-16H8" stroke="#fff" />
                <path d="M1.500 1.500h5v5h-5z" stroke="#fff" />
              </Svg>
            </Toggle>
          </span>
          <StatusCaret label="Snap modes" />
        </StatusGroup>
        <StatusGroup width="w-[131px]">
          <Toggle label="Annotation visibility" active>
            <Compass>
              <circle cx="17.500" cy="5" r="3" stroke="#fff" />
            </Compass>
          </Toggle>
          <Toggle label="Auto scale" width="w-[30px]">
            <Compass>
              <path d="M18 0l-4 7h3l-2 5 6-7h-3l2-5z" fill="#ececec" />
            </Compass>
          </Toggle>
          <Toggle label="Annotation scale">
            <Svg w={18} h={22}>
              <path d="M9 1l4 11 1 3 4 6-6-3-3-4-3 4-6 3 4-6 1-3z" fill="#ececec" />
            </Svg>
          </Toggle>
          <button className="flex flex-1 items-center justify-center gap-1">
            1:1
            <Caret big />
          </button>
        </StatusGroup>
        <StatusGroup width="w-[50px]">
          <Toggle label="Workspace">
            <Svg>
              <circle cx="10" cy="10" r="5" stroke="#e2e2e2" strokeWidth="5" />
              <circle cx="10" cy="10" r="8.500" stroke="#e2e2e2" strokeWidth="3" strokeDasharray="3.700 2.970" />
            </Svg>
          </Toggle>
          <StatusCaret label="Workspace options" />
        </StatusGroup>
        <StatusGroup width="w-[28px]">
          <Toggle label="Annotation monitor">
            <Plus />
          </Toggle>
        </StatusGroup>
        <StatusGroup width="w-[30px]">
          <Toggle label="Isolate objects">
            <Svg w={20} h={22}>
              <path d="M1.500 2.500h7v7h-7zM9 15l4 6H5z" stroke="#d5d8dc" />
              <circle cx="15.500" cy="10" r="3.500" stroke="#d5d8dc" />
            </Svg>
          </Toggle>
        </StatusGroup>
        <StatusGroup width="w-[4px]" />
        <StatusGroup width="w-[30px]">
          <Toggle label="Clean screen">
            <Svg w={20} h={16}>
              <path d="M.5.500h19v15H.5z" stroke="#dfe2e6" />
              <path d="M12 3h5v5zM3 8v5h5z" fill="#fff" />
              <path d="M11 8l4-4M9 8l-5 4" stroke="#fff" />
            </Svg>
          </Toggle>
        </StatusGroup>
        <StatusGroup width="w-[30px]">
          <Toggle label="Customization">
            <Svg w={20} h={18}>
              <path d="M0 0h20v2H0zM0 8h20v2H0zM0 16h20v2H0z" fill="#e6e8eb" />
            </Svg>
          </Toggle>
        </StatusGroup>
      </div>
    </footer>
  );
}

export default function App() {
  const [activeTab, setActiveTab] = useState("Home");

  return (
    <div className="h-screen min-h-[600px] overflow-hidden bg-[#dfe6ea] pl-[3px]">
      <div className="flex h-full flex-col overflow-hidden rounded-t-lg border-l-2 border-t border-[#0f5f92] bg-[#222933] pl-[3px] pr-[5px] font-['Open_Sans','Noto_Sans',sans-serif] text-[14px] text-[#e6e8eb]">
        <TitleBar />

        <div role="tablist" className="flex h-[25px] items-center pl-[3px]">
          {ribbonTabs.map(([tab, width]) => (
            <button
              key={tab}
              role="tab"
              aria-selected={tab === activeTab}
              onClick={() => setActiveTab(tab)}
              className={`${width} h-full whitespace-nowrap ${
                tab === activeTab
                  ? "bg-[#3b4453] text-white"
                  : "text-[#b4b9c0]"
              }`}
            >
              {tab}
            </button>
          ))}
          <button aria-label="Minimize ribbon" className="ml-[24px] flex items-center gap-[5px]">
            <Svg w={19} h={9}>
              <path d="M0 0h19v9H0z" fill="#f2f2f2" />
              <path d="M7 6h5L9.500 3z" fill="#4b5563" />
            </Svg>
            <Caret />
          </button>
        </div>

        <Ribbon />
        <FileTabs />
        <div className="h-[5px] bg-[#3b4453]" />

        <main className="relative flex-1 overflow-hidden bg-[#212830]">
          <DrawingArea />
          <div className="relative flex gap-[3px] pl-[3px] pt-[5px] text-white">
            <button>[−]</button>
            <button>[Top]</button>
            <button>[2D Wireframe]</button>
          </div>
          <ViewportControls />
          <ViewCube />
          <NavBar />
          <CommandLine />
        </main>

        <div className="h-[5px] bg-[#3b4453]" />
        <StatusBar />
      </div>
    </div>
  );
}
